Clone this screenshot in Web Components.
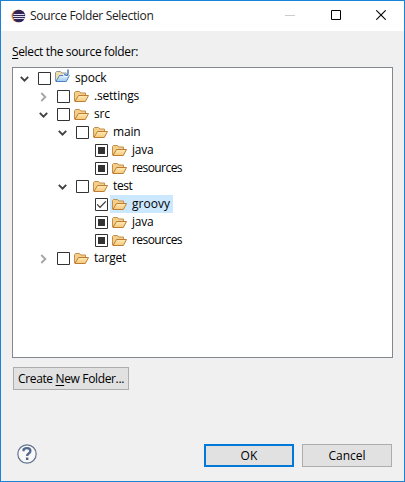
<!DOCTYPE html>
<html lang="en"><head><meta charset="utf-8"><title>Source Folder Selection</title>
<style>html,body{margin:0;height:100%;overflow:hidden}body{font:12px/18px "Open Sans","Noto Sans",sans-serif;color:#000}</style></head>
<body>
<source-dialog></source-dialog>
<script>
// Single-line label whose tracking is adjusted to a given width in pixels.
class FitLabel extends HTMLElement{
  connectedCallback(){
    const r=this.attachShadow({mode:'open'});
    r.innerHTML='<style>:host{display:inline-block;white-space:pre}::slotted(u){text-decoration-thickness:1px;text-underline-offset:2px}</style><slot></slot>';
    const w=+this.getAttribute('w');
    const n=this.textContent.length;
    const k=(w-this.getBoundingClientRect().width)/n;
    this.style.letterSpacing=k.toFixed(3)+'px';
  }
}
class UiIcon extends HTMLElement{
  connectedCallback(){
    const art={
      folder:[16,16,'<defs><linearGradient id="g" x2="0" y2="1"><stop stop-color="#ffebb8"/><stop offset="1" stop-color="#f5c777"/></linearGradient></defs><path d="M1.5 14V5.500L2.500 4.500h4L7.800 6h4.700v3" fill="#f3cf8c" stroke="#c68d47"/><path d="M1.900 14.500L5.500 8.500H15.500L12.300 14.500z" fill="url(#g)" stroke="#bd7d33" stroke-linejoin="round"/>'],
      project:[16,16,'<defs><linearGradient id="g" x2="0" y2="1"><stop stop-color="#e0efff"/><stop offset="1" stop-color="#9cc8f2"/></linearGradient></defs><path d="M1.500 12V3.500L2.500 2.500h4L7.800 4h4.700v3" fill="#f0e0b0" stroke="#8e9a98"/><path d="M1.900 12.500L5.500 6.500H15.300L12.300 12.500z" fill="url(#g)" stroke="#4c83c0" stroke-linejoin="round"/><path d="M14 .5v4q0 2-1.800 2T10.200 5" fill="none" stroke="#fff" stroke-width="2.600"/><path d="M14 .5v4q0 1.800-1.700 1.800T10.500 4.800" fill="none" stroke="#4a7fc4" stroke-width="1.500"/>'],
      open:[9,7,'<path d="M.8.9l3.700 3.700L8.200.9" fill="none" stroke="#404040" stroke-width="1.900"/>'],
      closed:[7,10,'<path d="M1.300 1l4 4-4 4" fill="none" stroke="#a6a6a6" stroke-width="1.900"/>'],
      eclipse:[15,14,'<circle cx="6.700" cy="7" r="6.300" fill="#f39a3d"/><circle cx="7.900" cy="7" r="6.300" fill="#2f2558"/><path d="M2.500 5.500h11M2 7.500h12M2.500 9.500h11" stroke="#e4e1ef"/>'],
      help:[20,20,'<circle cx="10" cy="10" r="9.200" fill="#f8f8f9" stroke="#62758f" stroke-width="1.200"/><path d="M6.600 7.300V5.300q1.500-1.200 3.400-1.200 3.400 0 3.400 2.800 0 1.500-1.700 2.500-1.600 1-1.600 2.500" fill="none" stroke="#52688c" stroke-width="2.300"/><path d="M8.900 13.500h2.500v2.500H8.900z" fill="#52688c"/>'],
      min:[10,10,'<path d="M0 5.500h10" stroke="#ccc"/>'],
      max:[10,10,'<path d="M.5.5h9v9h-9z" fill="none" stroke="#000"/>'],
      close:[10,10,'<path d="M.3.3l9.400 9.400M9.700.3L.3 9.700" stroke="#000" stroke-width="1.100"/>']
    }[this.getAttribute('name')];
    this.attachShadow({mode:'open'}).innerHTML=`<style>:host{display:block;flex:none}svg{display:block}</style><svg width="${art[0]}" height="${art[1]}" viewBox="0 0 ${art[0]} ${art[1]}">${art[2]}</svg>`;
  }
}
class CheckBox extends HTMLElement{
  connectedCallback(){
    const s=this.getAttribute('state');
    const mark=s==='mixed'?'<path d="M3 3h7v7H3z" fill="#333"/>':s==='checked'?'<path d="M2.200 6.400l2.800 2.900 5.800-6" fill="none" stroke="#333" stroke-width="1.200"/>':'';
    this.attachShadow({mode:'open'}).innerHTML=`<style>:host{display:block;flex:none;width:13px;height:13px}svg{display:block}</style><svg width="13" height="13"><path d="M.5.5h12v12H.5z" fill="#fff" stroke="#333"/>${mark}</svg>`;
  }
}
class TreeRow extends HTMLElement{
  connectedCallback(){
    const g=n=>this.getAttribute(n),a=g('arrow');
    this.attachShadow({mode:'open'}).innerHTML=`<style>
      :host{display:flex;height:18px;padding-left:${6+19*g('level')}px}
      .arrow{width:19px;height:18px;display:grid;align-items:start;box-sizing:border-box;padding:${a==='closed'?'5px 0 0 2px':'7px 0 0 1px'}}
      check-box{margin-top:3px}
      .item{display:flex;height:18px;margin-left:2px;padding:0 3px 0 1px}
      .item.sel{background:#cce8ff}
      fit-label{margin-left:5px;line-height:18px}
    </style><div class="arrow">${a?`<ui-icon name="${a}"></ui-icon>`:''}</div><check-box state="${g('state')||''}"></check-box><div class="item ${this.hasAttribute('selected')?'sel':''}"><ui-icon name="${g('icon')||'folder'}"></ui-icon><fit-label w="${g('w')}">${g('label')}</fit-label></div>`;
  }
}
class PushButton extends HTMLElement{
  connectedCallback(){
    this.attachShadow({mode:'open'}).innerHTML='<style>:host{display:flex;justify-content:center;box-sizing:border-box;width:90px;height:23px;border:1px solid #adadad;background:#e1e1e1;line-height:21px}:host([primary]){border:2px solid #0078d7;line-height:19px}:host([wide]){width:116px}</style><slot></slot>';
  }
}
class SourceDialog extends HTMLElement{
  connectedCallback(){
    this.attachShadow({mode:'open'}).innerHTML=`<style>
      :host{display:flex;flex-direction:column;box-sizing:border-box;width:405px;height:482px;border:1px solid #1883d7;background:#f0f0f0}
      header{display:flex;align-items:center;height:30px;background:#fff;padding:0 18px 0 10px;box-sizing:border-box}
      header fit-label{margin-left:4px;color:#222}
      .controls{display:grid;grid-template-columns:10px 10px 10px;column-gap:35.5px;margin:0 0 2px auto}
      .caption{padding:12px 11px 0;height:24px}
      .tree{margin:0 11px;height:291px;box-sizing:border-box;border:1px solid #828790;background:#fff;padding-top:1px}
      .create{margin:9px 12px 0}
      footer{display:flex;align-items:flex-start;margin:auto 12px 14px 16px;gap:8px}
      footer ui-icon{margin-right:auto}
    </style>
    <header><ui-icon name="eclipse"></ui-icon><fit-label w="123.5">Source Folder Selection</fit-label><div class="controls"><ui-icon name="min"></ui-icon><ui-icon name="max"></ui-icon><ui-icon name="close"></ui-icon></div></header>
    <div class="caption"><fit-label w="126"><u>S</u>elect the source folder:</fit-label></div>
    <div class="tree">
      <tree-row level="0" arrow="open" icon="project" label="spock" w="31.5"></tree-row>
      <tree-row level="1" arrow="closed" label=".settings" w="45"></tree-row>
      <tree-row level="1" arrow="open" label="src" w="16"></tree-row>
      <tree-row level="2" arrow="open" label="main" w="27.5"></tree-row>
      <tree-row level="3" state="mixed" label="java" w="21.5"></tree-row>
      <tree-row level="3" state="mixed" label="resources" w="50"></tree-row>
      <tree-row level="2" arrow="open" label="test" w="19.5"></tree-row>
      <tree-row level="3" state="checked" selected label="groovy" w="38"></tree-row>
      <tree-row level="3" state="mixed" label="java" w="21.5"></tree-row>
      <tree-row level="3" state="mixed" label="resources" w="50"></tree-row>
      <tree-row level="1" arrow="closed" label="target" w="32"></tree-row>
    </div>
    <push-button class="create" wide><fit-label w="106">Create <u>N</u>ew Folder...</fit-label></push-button>
    <footer><ui-icon name="help"></ui-icon><push-button primary><fit-label w="17">OK</fit-label></push-button><push-button><fit-label w="37">Cancel</fit-label></push-button></footer>`;
  }
}
customElements.define('ui-icon',UiIcon);
customElements.define('check-box',CheckBox);
customElements.define('fit-label',FitLabel);
customElements.define('push-button',PushButton);
customElements.define('tree-row',TreeRow);
customElements.define('source-dialog',SourceDialog);
</script>
</body></html>
